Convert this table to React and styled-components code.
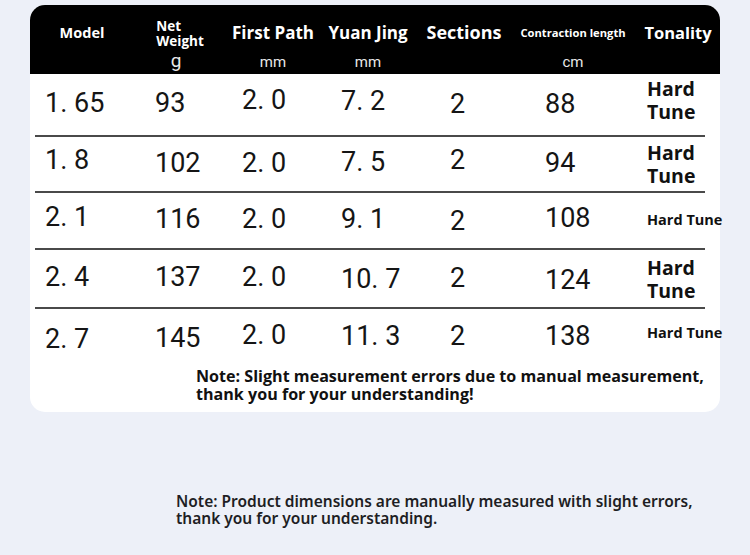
import React from 'react';
import styled, { createGlobalStyle } from 'styled-components';

const Global = createGlobalStyle`
  html, body { margin: 0; padding: 0; background: #edf0f8; }
  body { width: 750px; height: 555px; overflow: hidden; font-family: "Open Sans", "Noto Sans", sans-serif; }
`;

const Page = styled.div`
  width: 750px;
  height: 555px;
  box-sizing: border-box;
  padding: 5px 0 0 30px;
  display: flex;
  flex-direction: column;
`;

const Card = styled.div`
  width: 690px;
  background: #fff;
  border-radius: 15px;
  padding-bottom: 9px;
`;

const Header = styled.div`
  height: 69px;
  box-sizing: border-box;
  padding-top: 9px;
  background: #000;
  border-radius: 15px 15px 0 0;
  display: grid;
  grid-template-columns: 104px 92px 94px 96px 96px 122px 86px;
  color: #fff;
`;

const HeadCell = styled.div`
  display: grid;
  grid-template-rows: 38px 20px;
  justify-items: center;
`;

const Label = styled.div`
  display: flex;
  align-items: center;
  font-weight: 700;
  font-size: ${p => p.size}px;
  line-height: ${p => p.lh || 1.2};
  text-align: left;
  white-space: nowrap;
  transform: translate(${p => p.dx || 0}px, ${p => p.dy || 0}px);
`;

const Unit = styled.div`
  font-family: Roboto, sans-serif;
  font-size: ${p => p.size || 15}px;
  line-height: 20px;
  color: #e8e8e8;
  transform: translate(${p => p.dx || 0}px, ${p => p.dy || 0}px);
`;

const Rows = styled.div`
  margin: 0 15px 0 5px;
`;

const Row = styled.div`
  display: grid;
  grid-template-columns: 110px 87px 99px 109px 95px 102px 1fr;
  padding-left: 10px;
  height: ${p => p.h}px;
  box-sizing: border-box;
  border-bottom: ${p => (p.last ? 'none' : '2px solid #4a4a4a')};
  align-items: center;
`;

const Num = styled.div`
  font-family: Roboto, sans-serif;
  font-size: 27px;
  line-height: 1;
  color: #151515;
  white-space: pre;
  transform: translateY(${p => p.dy}px);
`;

const Tone = styled.div`
  font-weight: 700;
  font-size: ${p => (p.big ? 19.5 : 14.5)}px;
  line-height: ${p => (p.big ? '23px' : '1')};
  color: #111;
  white-space: ${p => (p.big ? 'normal' : 'nowrap')};
  width: ${p => (p.big ? '56px' : 'auto')};
  transform: translateY(${p => p.dy}px);
`;

const CardNote = styled.p`
  margin: 6px 0 0 166px;
  font-weight: 700;
  font-size: 16.1px;
  line-height: 18px;
  color: #111;
`;

const BottomNote = styled.p`
  margin: 81px 0 0 146px;
  font-family: "Noto Sans", "Open Sans", sans-serif;
  font-weight: 600;
  font-size: 15.5px;
  line-height: 17px;
  color: #1e1e24;
`;

const rows = [
  { h: 63, vals: ['1. 65', '93', '2. 0', '7. 2', '2', '88'], dy: [-1.5, -1.5, -4.5, -3.5, -0.5, -0.5], big: true, tdy: -5 },
  { h: 56, vals: ['1. 8', '102', '2. 0', '7. 5', '2', '94'], dy: [-4, -1, -1, -2, -4, -1], big: true, tdy: -0.5 },
  { h: 57, vals: ['2. 1', '116', '2. 0', '9. 1', '2', '108'], dy: [-3.5, -1.5, -1.5, -1.5, 0.5, -2.5], big: false, tdy: -0.5 },
  { h: 59, vals: ['2. 4', '137', '2. 0', '10. 7', '2', '124'], dy: [-1.5, -1.5, -1.5, 0.5, -0.5, 1.5], big: true, tdy: 0 },
  { h: 52, vals: ['2. 7', '145', '2. 0', '11. 3', '2', '138'], dy: [4, 3, 0, 1, 1, 1], big: false, tdy: -2 },
];

export default function App() {
  return (
    <>
      <Global />
      <Page>
        <Card>
          <Header>
            <HeadCell>
              <Label size={14.5}>Model</Label>
            </HeadCell>
            <HeadCell>
              <Label size={13.5} lh="15px" dy={1}>Net<br />Weight</Label>
              <Unit size={19} dx={-4} dy={-1}>g</Unit>
            </HeadCell>
            <HeadCell>
              <Label size={17}>First Path</Label>
              <Unit>mm</Unit>
            </HeadCell>
            <HeadCell>
              <Label size={17}>Yuan Jing</Label>
              <Unit>mm</Unit>
            </HeadCell>
            <HeadCell>
              <Label size={18}>Sections</Label>
            </HeadCell>
            <HeadCell>
              <Label size={11.2}>Contraction length</Label>
              <Unit>cm</Unit>
            </HeadCell>
            <HeadCell>
              <Label size={16.5} dx={1}>Tonality</Label>
            </HeadCell>
          </Header>
          <Rows>
            {rows.map((r, i) => (
              <Row key={i} h={r.h} last={i === rows.length - 1}>
                {r.vals.map((v, j) => (
                  <Num key={j} dy={r.dy[j]}>{v}</Num>
                ))}
                <Tone big={r.big} dy={r.tdy}>Hard Tune</Tone>
              </Row>
            ))}
          </Rows>
          <CardNote>
            Note: Slight measurement errors due to manual measurement,<br />
            thank you for your understanding!
          </CardNote>
        </Card>
        <BottomNote>
          Note: Product dimensions are manually measured with slight errors,<br />
          thank you for your understanding.
        </BottomNote>
      </Page>
    </>
  );
}
